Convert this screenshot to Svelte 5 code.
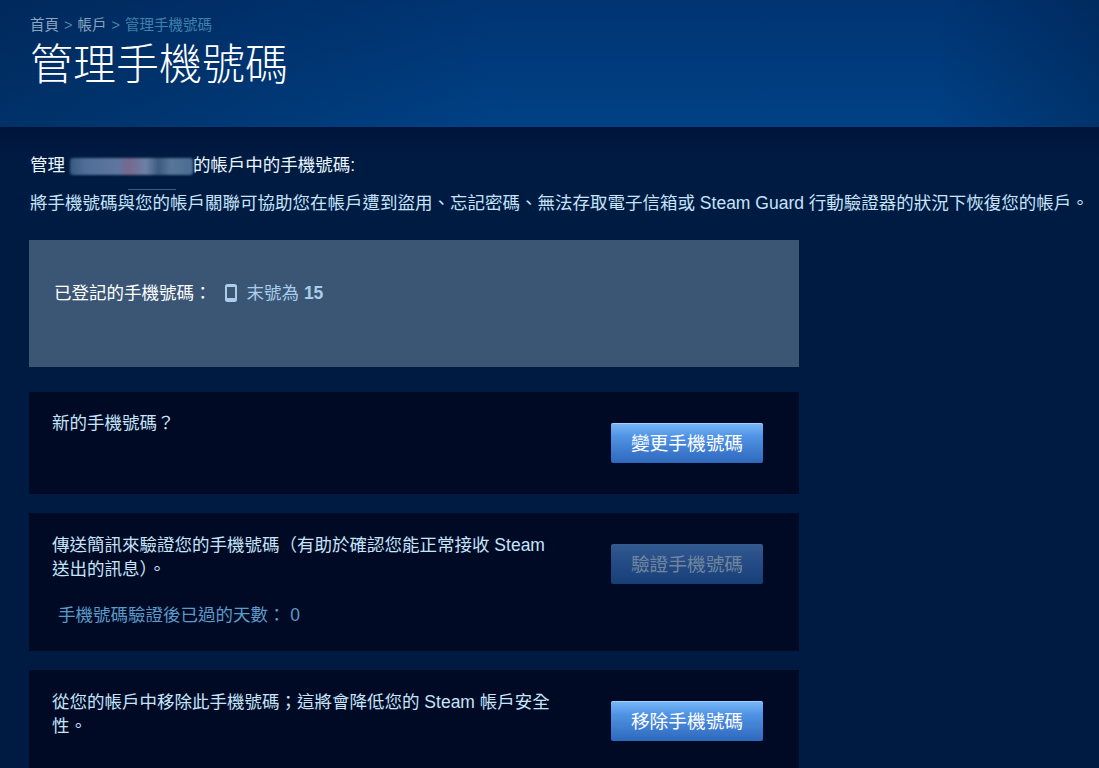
<script>
	const fontNote = "手機號碼";
</script>

<div class="page">
	<header class="banner">
		<div class="crumbs">
			<span>首頁</span><span class="sep">&gt;</span><span>帳戶</span><span class="sep">&gt;</span><span class="here">管理手機號碼</span>
		</div>
		<h1>管理手機號碼</h1>
	</header>

	<main class="content">
		<div class="intro">管理 <span class="blurred"></span>的帳戶中的手機號碼:</div>
		<div class="tick"></div>
		<p class="desc">將手機號碼與您的帳戶關聯可協助您在帳戶遭到盜用、忘記密碼、無法存取電子信箱或 Steam Guard 行動驗證器的狀況下恢復您的帳戶。</p>

		<div class="column">
			<section class="current">
				<span class="label">已登記的手機號碼：</span>
				<svg class="phone" width="12" height="18" viewBox="0 0 12 18" aria-hidden="true">
					<path fill-rule="evenodd" fill="#a9cdeb" d="M2.5 0h7A2.5 2.5 0 0 1 12 2.5v13A2.5 2.5 0 0 1 9.500 18h-7A2.500 2.500 0 0 1 0 15.500v-13A2.500 2.500 0 0 1 2.500 0zM2 3v11h8V3z"/>
				</svg>
				<span class="number">末號為 <b>15</b></span>
			</section>

			<section class="row short">
				<div class="text">新的手機號碼？</div>
				<button class="btn">變更{fontNote}</button>
			</section>

			<section class="row tall">
				<div class="text">
					傳送簡訊來驗證您的手機號碼（有助於確認您能正常接收 Steam 送出的訊息）。
					<div class="days">手機號碼驗證後已過的天數： 0</div>
				</div>
				<button class="btn off">驗證{fontNote}</button>
			</section>

			<section class="row last">
				<div class="text">從您的帳戶中移除此手機號碼；這將會降低您的 Steam 帳戶安全性。</div>
				<button class="btn">移除{fontNote}</button>
			</section>
		</div>
	</main>
</div>

<style>
	:global(body) {
		background: #001a3e;
		overflow: hidden;
	}
	.page {
		height: 768px;
		overflow: hidden;
		font-family: "Liberation Sans", "Noto Sans CJK TC", sans-serif;
		color: #c6e4fb;
		background: #001b42;
	}
	.banner {
		height: 127px;
		box-sizing: border-box;
		padding: 15px 30px 0;
		background:
			linear-gradient(90deg, rgba(0, 20, 50, 0.35) 0%, rgba(0, 20, 50, 0) 45%, rgba(0, 20, 50, 0) 85%, rgba(0, 20, 50, 0.3) 100%),
			linear-gradient(180deg, #003473 0%, #004185 100%);
	}
	.crumbs {
		display: flex;
		font-size: 14.5px;
		line-height: 20px;
		color: #8ba6bf;
	}
	.crumbs .sep {
		margin: 0 5px;
		color: #4f7ea8;
	}
	.crumbs .here {
		color: #3f80ad;
	}
	h1 {
		margin: 2px 0 0;
		font-size: 43px;
		font-weight: 300;
		line-height: 56px;
		letter-spacing: 0;
		color: #fff;
	}
	.content {
		padding: 28px 0 0 30px;
		background: linear-gradient(180deg, #00143a 0, #001b42 34px);
	}
	.intro {
		display: flex;
		align-items: center;
		font-size: 17.5px;
		line-height: 20px;
		color: #eaf6ff;
		white-space: pre;
	}
	.blurred {
		display: block;
		width: 123px;
		height: 17px;
		margin-top: 2px;
		border-radius: 3px;
		filter: blur(0.8px);
		background: linear-gradient(90deg, #38597f 0%, #4f6e97 12%, #5d76a0 38%, #77688e 48%, #6a82a6 62%, #3b5a7d 72%, #577698 82%, #4b6d94 100%);
	}
	.tick {
		width: 48px;
		height: 1px;
		margin: 14px 0 0 98px;
		background: #3d5f87;
	}
	.desc {
		margin: 3px 0 0;
		font-size: 17.5px;
		line-height: 20px;
		white-space: nowrap;
		color: #c6e4fb;
	}
	.column {
		width: 770px;
		margin: 27px 0 0 -1px;
		display: flex;
		flex-direction: column;
	}
	.current {
		height: 127px;
		box-sizing: border-box;
		padding: 42px 25px 0;
		display: flex;
		align-items: flex-start;
		background: #3a5674;
		font-size: 17.5px;
		line-height: 22px;
		margin-bottom: 25px;
	}
	.label {
		color: #fff;
	}
	.phone {
		margin: 2px 10px 0 13px;
	}
	.number {
		color: #a9cdeb;
	}
	.number b {
		font-weight: 700;
	}
	.row {
		box-sizing: border-box;
		background: #000a25;
		padding: 19px 36px 0 23px;
		display: flex;
		justify-content: space-between;
		align-items: flex-start;
		font-size: 17.5px;
		line-height: 24px;
		margin-bottom: 19px;
	}
	.short {
		height: 102px;
	}
	.tall {
		height: 138px;
	}
	.tall .text {
		padding-top: 1px;
	}
	.last .text {
		padding-top: 1px;
	}
	.last {
		height: 110px;
		margin-bottom: 0;
	}
	.text {
		width: 500px;
		color: #c6e4fb;
	}
	.days {
		margin: 22px 0 0 6px;
		color: #5b9ac9;
	}
	.btn {
		width: 152px;
		height: 40px;
		flex: none;
		margin-top: 12px;
		padding: 0 0 4px;
		border: 0;
		border-radius: 2px;
		font-family: inherit;
		font-size: 18.7px;
		color: #fff;
		background: linear-gradient(180deg, #78b8f8 0%, #4f92e4 35%, #2e68bd 100%);
		box-shadow: inset 0 1px 0 rgba(255, 255, 255, 0.35);
	}
	.btn.off {
		color: #71869e;
		background: linear-gradient(180deg, #33598f 0%, #234a85 50%, #173f77 100%);
		box-shadow: none;
	}
</style>
